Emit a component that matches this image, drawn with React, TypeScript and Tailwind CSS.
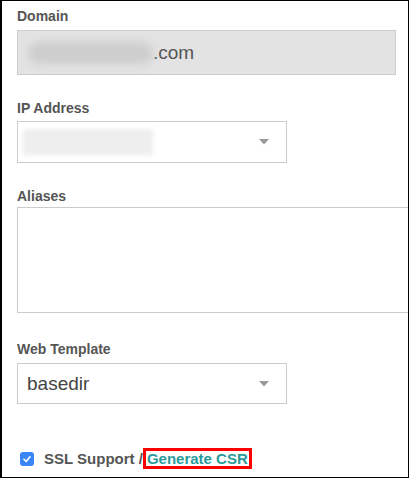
import React from 'react';

// small grey caret used by the two selects
const Caret = () => (
  <svg width="10" height="6" viewBox="0 0 10 6" className="shrink-0">
    <path d="M0 0 L10 0 L5 5.5 Z" fill="#9a9a9a" />
  </svg>
);

const Label: React.FC<{ children: React.ReactNode; className?: string }> = ({ children, className }) => (
  <div className={`text-[14px] leading-[16px] font-bold text-[#555555] ${className ?? ''}`}>{children}</div>
);

export default function App() {
  return (
    <div
      className="w-[409px] h-[478px] overflow-hidden bg-white border-black border-t border-r border-b border-l-2 pl-[15px] pt-[7px]"
      style={{ fontFamily: '"Liberation Sans", Arial, sans-serif' }}
    >
      {/* Domain */}
      <Label>Domain</Label>
      <div className="mt-[6px] w-[379px] h-[45px] border border-[#cccccc] bg-[#e3e3e3] flex items-center pl-[10px]">
        <div className="w-[125px] h-[22px] rounded-full bg-[#cdcdcd] blur-[4px]" />
        <span className="text-[19px] text-[#555555] leading-none">.com</span>
      </div>

      {/* IP Address */}
      <Label className="mt-[25px]">IP Address</Label>
      <div className="mt-[5px] w-[270px] h-[42px] border border-[#cccccc] bg-white flex items-center pl-[5px] pr-[17px] justify-between">
        <div className="w-[130px] h-[26px] bg-[#eeeeee] blur-[2px]" />
        <Caret />
      </div>

      {/* Aliases */}
      <Label className="mt-[25px]">Aliases</Label>
      <div className="mt-[3px] w-[420px] h-[106px] border border-[#cccccc] bg-white" />

      {/* Web Template */}
      <Label className="mt-[28px]">Web Template</Label>
      <div className="mt-[6px] w-[270px] h-[41px] border border-[#cccccc] bg-white flex items-center pl-[9px] pr-[17px] justify-between">
        <span className="text-[19px] text-[#444444] leading-none">basedir</span>
        <Caret />
      </div>

      {/* SSL */}
      <div className="mt-[43px] flex items-center">
        <div className="ml-[3px] mt-[1px] w-[14px] h-[14px] rounded-[3px] bg-[#3b86f7] flex items-center justify-center">
          <svg width="10" height="10" viewBox="0 0 10 10">
            <path d="M2 5.2 L4.2 7.4 L8 2.8" fill="none" stroke="white" strokeWidth="1.6" strokeLinecap="round" strokeLinejoin="round" />
          </svg>
        </div>
        <span className="ml-[10px] mt-[1px] text-[15px] font-bold text-[#555555]">SSL Support /</span>
        <span className="border-[3px] border-[#ff0000] px-[1px] text-[15px] leading-[15px] font-bold text-[#2a9a9a]">
          Generate CSR
        </span>
      </div>
    </div>
  );
}
